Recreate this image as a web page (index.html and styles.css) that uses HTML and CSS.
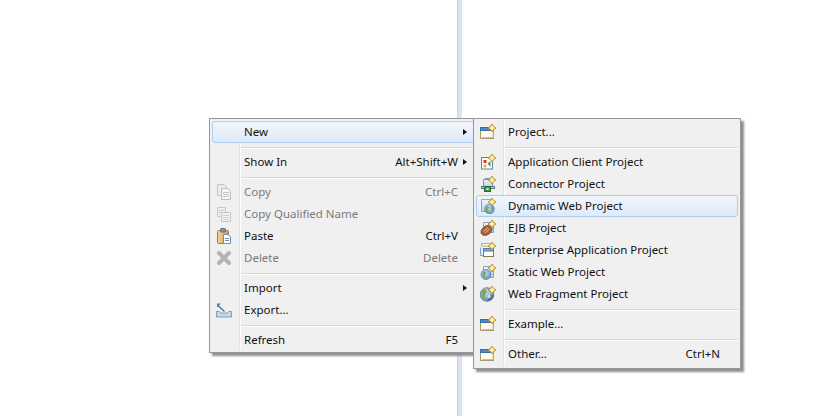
FILE: index.html
```html
<!DOCTYPE html>
<html lang="en">
<head>
<meta charset="utf-8">
<title>Context menu</title>
<link rel="stylesheet" href="styles.css">
</head>
<body>
<svg class="defs" width="0" height="0" aria-hidden="true">
  <defs>
    <linearGradient id="blue" x1="0" y1="0" x2="0" y2="1"><stop offset="0" stop-color="#eef5fb"/><stop offset="1" stop-color="#b8d2ea"/></linearGradient>
    <linearGradient id="clip" x1="0" y1="0" x2="1" y2="0"><stop offset="0" stop-color="#f6d3a0"/><stop offset="1" stop-color="#d49a58"/></linearGradient>
    <radialGradient id="sea" cx=".4" cy=".35" r=".8"><stop offset="0" stop-color="#c4e2f8"/><stop offset="1" stop-color="#4a8cc4"/></radialGradient>
    <symbol id="spark" viewBox="0 0 16 16">
      <path d="M12 0 13.600 2.400 16 4 13.600 5.600 12 8 10.400 5.600 8 4 10.400 2.400Z" fill="#ffdf70" stroke="#a88428" stroke-width=".8"/>
      <path d="M12 2.300 13.200 4 12 5.700 10.800 4Z" fill="#fff9d8"/>
    </symbol>
    <symbol id="i-project" viewBox="0 0 16 16">
      <rect x="0.500" y="3.500" width="13" height="11" fill="#fffdf2" stroke="#a89a70"/>
      <rect x="0.500" y="3.500" width="11" height="3" fill="#4d87c7" stroke="#3a6ea8"/>
      <path d="M2 13.500H13V7.500" fill="none" stroke="#e8bf60"/>
      <use href="#spark" width="16" height="16"/>
    </symbol>
    <symbol id="i-app" viewBox="0 0 16 16">
      <rect x="1.500" y="3.500" width="11" height="11.500" fill="#fff" stroke="#5f82a6"/>
      <rect x="3.500" y="6" width="3" height="3" fill="#d83a30"/>
      <rect x="3.500" y="10.500" width="3" height="3" fill="#e3b836"/>
      <path d="M7.500 9.500 10.500 7V13Z" fill="#3aa040"/>
      <use href="#spark" width="16" height="16"/>
    </symbol>
    <symbol id="i-conn" viewBox="0 0 16 16">
      <path d="M3.500 3.500H12.500V11H3.500Z" fill="url(#blue)" stroke="#7f93a8"/>
      <path d="M5 2.500H10" stroke="#8a97a5" fill="none"/>
      <rect x="1.500" y="10.500" width="13" height="2" fill="#c2ccd4" stroke="#66747f"/>
      <rect x="4.500" y="10.500" width="6" height="5" fill="#3e9a4c" stroke="#1e6a30"/>
      <rect x="6.500" y="12" width="2" height="2" fill="#d8f0d8"/>
      <use href="#spark" width="16" height="16"/>
    </symbol>
    <symbol id="i-dyn" viewBox="0 0 16 16">
      <path d="M1.500 1.500H11V13.500H1.500Z" fill="url(#blue)" stroke="#8aa4c0"/>
      <path d="M1.500 1.500H10" stroke="#c8a850" fill="none"/>
      <circle cx="9.500" cy="11" r="4.800" fill="url(#sea)" stroke="#4a6c90" stroke-width=".6"/>
      <path d="M6 9C8 7.500 9 8.500 9 9.500S7.500 11.500 8 12.500 10 14.500 9 15.500C7 15 5 12.500 6 9ZM11 8C13 8.500 14 10.500 14 11.500L12 12.500 11 10.500Z" fill="#7fa850"/>
      <use href="#spark" width="16" height="16"/>
    </symbol>
    <symbol id="i-ejb" viewBox="0 0 16 16">
      <path d="M3.500 2.500H13.500V12.500H3.500Z" fill="url(#blue)" stroke="#8aa4c0"/>
      <ellipse cx="6.500" cy="10.500" rx="6" ry="4.300" fill="#a8623a" stroke="#6c3a20" stroke-width=".7" transform="rotate(-35 6.500 10.500)"/>
      <path d="M3.500 11.500 8 7.500M5 13 9.500 9" stroke="#eccfa8" stroke-width=".9" fill="none"/>
      <use href="#spark" width="16" height="16"/>
    </symbol>
    <symbol id="i-ent" viewBox="0 0 16 16">
      <path d="M0.500 5.500V13.500H3.500" fill="#dcebf8" stroke="#7fa8d0"/>
      <path d="M1.500 1.500H11V4H1.500Z" fill="#fffdf2" stroke="#c8a850"/>
      <rect x="3.500" y="6.500" width="10" height="8" fill="#fffdf2" stroke="#8a7850"/>
      <rect x="3.500" y="6.500" width="10" height="2.500" fill="#7fabd8" stroke="#4f7fb0"/>
      <use href="#spark" width="16" height="16"/>
    </symbol>
    <symbol id="i-static" viewBox="0 0 16 16">
      <path d="M3.500 2.500H13.500V13.500H3.500Z" fill="url(#blue)" stroke="#8aa4c0"/>
      <circle cx="6" cy="10.500" r="5" fill="url(#sea)" stroke="#4a6c90" stroke-width=".6"/>
      <path d="M3 8C5 7 6 8 6 9S4.500 11 5 12 7 14 6 15.300C4 14.500 1.500 11 3 8Z" fill="#7fa850"/>
      <use href="#spark" width="16" height="16"/>
    </symbol>
    <symbol id="i-frag" viewBox="0 0 16 16">
      <circle cx="7" cy="8.500" r="6.800" fill="url(#sea)" stroke="#3f658c" stroke-width=".7"/>
      <path d="M3 4C5 3 7 4 6.500 6.500S4 9 5 11 7 13 6 15C3 14 -.5 9 3 4Z" fill="#7fa850"/>
      <path d="M7.500 9H14C14 12 11 15 7.500 15.300Z" fill="#5a6f90"/>
      <path d="M7.500 9H10.500V12H7.500Z" fill="#ead9a0"/>
      <use href="#spark" width="16" height="16"/>
    </symbol>
    <symbol id="i-copy" viewBox="0 0 16 16">
      <path d="M1.500 0.500H8L10.500 3V11.500H1.500Z" fill="#ececec" stroke="#c4c4c4"/>
      <path d="M5.500 4.500H11.500L14.500 7.500V15.500H5.500Z" fill="#f4f4f4" stroke="#bdbdbd"/>
      <path d="M7 8.500H13M7 10.500H13M7 12.500H13" stroke="#c8c8c8"/>
    </symbol>
    <symbol id="i-copyq" viewBox="0 0 16 16">
      <path d="M1.500 1.500H9.500V10.500H1.500Z" fill="#ececec" stroke="#c8c8c8"/>
      <path d="M3 4.500H8M3 6.500H8" stroke="#d0d0d0"/>
      <path d="M5.500 6.500H14.500V15.500H5.500Z" fill="#f4f4f4" stroke="#c4c4c4"/>
      <path d="M7 9.500H13M7 11.500H13M7 13.500H13" stroke="#cccccc"/>
    </symbol>
    <symbol id="i-paste" viewBox="0 0 16 16">
      <rect x="1.500" y="2.500" width="11" height="13" rx="1" fill="url(#clip)" stroke="#a87a40"/>
      <rect x="4.500" y="0.500" width="5" height="3.500" rx="1" fill="#7d95ad" stroke="#4f6c88"/>
      <path d="M7.500 6.500H12L14.500 9V15.500H7.500Z" fill="#fff" stroke="#6f8fb0"/>
      <path d="M9 10.500H13M9 12.500H13" stroke="#6f8fb0"/>
    </symbol>
    <symbol id="i-del" viewBox="0 0 16 16">
      <path d="M3 3 13 13M13 3 3 13" stroke="#b4b4b4" stroke-width="4" stroke-linecap="round"/>
    </symbol>
    <symbol id="i-export" viewBox="0 0 16 16">
      <path d="M0.500 9.500H3.500L5 11H11L12.500 9.500H15.500V15H0.500Z" fill="#c4d8ec" stroke="#7a9cbe"/>
      <path d="M2 3.500 8.500 9.500" stroke="#4a6a8c" stroke-width="1.200" fill="none"/>
      <path d="M1 1.500H5L1 5.500Z" fill="#4f7fb0"/>
    </symbol>
  </defs>
</svg>

<div class="canvas">
  <div class="stripe"></div>

  <div class="menu menu-main">
    <div class="item active"><span class="ico"></span><span class="label">New</span><span class="arrow"></span></div>
    <div class="sep"></div>
    <div class="item"><span class="ico"></span><span class="label">Show In</span><span class="key">Alt+Shift+W</span><span class="arrow"></span></div>
    <div class="sep"></div>
    <div class="item off"><span class="ico"><svg class="svg"><use href="#i-copy"/></svg></span><span class="label">Copy</span><span class="key">Ctrl+C</span><span class="noarrow"></span></div>
    <div class="item off"><span class="ico"><svg class="svg"><use href="#i-copyq"/></svg></span><span class="label">Copy Qualified Name</span></div>
    <div class="item"><span class="ico"><svg class="svg"><use href="#i-paste"/></svg></span><span class="label">Paste</span><span class="key">Ctrl+V</span><span class="noarrow"></span></div>
    <div class="item off"><span class="ico"><svg class="svg"><use href="#i-del"/></svg></span><span class="label">Delete</span><span class="key">Delete</span><span class="noarrow"></span></div>
    <div class="sep"></div>
    <div class="item"><span class="ico"></span><span class="label">Import</span><span class="arrow"></span></div>
    <div class="item"><span class="ico"><svg class="svg"><use href="#i-export"/></svg></span><span class="label">Export...</span></div>
    <div class="sep"></div>
    <div class="item"><span class="ico"></span><span class="label">Refresh</span><span class="key">F5</span><span class="noarrow"></span></div>
  </div>

  <div class="menu menu-sub">
    <div class="item"><span class="ico"><svg class="svg"><use href="#i-project"/></svg></span><span class="label">Project...</span></div>
    <div class="sep"></div>
    <div class="item"><span class="ico"><svg class="svg"><use href="#i-app"/></svg></span><span class="label">Application Client Project</span></div>
    <div class="item"><span class="ico"><svg class="svg"><use href="#i-conn"/></svg></span><span class="label">Connector Project</span></div>
    <div class="item active"><span class="ico"><svg class="svg"><use href="#i-dyn"/></svg></span><span class="label">Dynamic Web Project</span></div>
    <div class="item"><span class="ico"><svg class="svg"><use href="#i-ejb"/></svg></span><span class="label">EJB Project</span></div>
    <div class="item"><span class="ico"><svg class="svg"><use href="#i-ent"/></svg></span><span class="label">Enterprise Application Project</span></div>
    <div class="item"><span class="ico"><svg class="svg"><use href="#i-static"/></svg></span><span class="label">Static Web Project</span></div>
    <div class="item"><span class="ico"><svg class="svg"><use href="#i-frag"/></svg></span><span class="label">Web Fragment Project</span></div>
    <div class="sep"></div>
    <div class="item"><span class="ico"><svg class="svg"><use href="#i-project"/></svg></span><span class="label">Example...</span></div>
    <div class="sep"></div>
    <div class="item"><span class="ico"><svg class="svg"><use href="#i-project"/></svg></span><span class="label">Other...</span><span class="key">Ctrl+N</span><span class="noarrow"></span></div>
  </div>
</div>
</body>
</html>
```
FILE: styles.css
```css
* { box-sizing: border-box; }
html, body { margin: 0; padding: 0; background: #fff; }
body { width: 832px; height: 416px; overflow: hidden; font-family: "Noto Sans", "Open Sans", sans-serif; font-size: 11.5px; color: #111; }
.defs { position: absolute; }
.canvas { position: relative; width: 832px; height: 416px; }
.stripe { position: absolute; left: 457px; top: 0; width: 5px; height: 416px; background: linear-gradient(90deg, #c4cbe0 0, #dbe2f6 30%, #dbe2f6 100%); }
.menu { position: absolute; top: 118px; background: #f0f0f0; border: 1px solid #979797; padding: 2px; box-shadow: 3px 3px 2px #8f8f8f; }
.menu-main { left: 209px; width: 266px; height: 235px; }
.menu-sub { left: 473px; width: 268px; height: 251px; }
.menu::before { content: ""; position: absolute; top: 2px; bottom: 2px; left: 29px; width: 1px; background: #e2e3e3; box-shadow: 1px 0 0 #fff; }
.item { position: relative; display: flex; align-items: center; height: 22px; border: 1px solid transparent; border-radius: 3px; }
.item.active { background: linear-gradient(#f1f6fc, #dfe9f8); border-color: #aeccf0; }
.menu-main .item.active { margin-right: -4px; padding-right: 4px; }
.item.off { color: #7a7a7a; }
.ico { flex: none; width: 29px; display: flex; padding-left: 3px; }
.svg { display: block; width: 16px; height: 16px; }
.label { flex: 1; padding: 0 0 1px 2px; white-space: nowrap; }
.key { padding-bottom: 1px; white-space: nowrap; }
.arrow, .noarrow { flex: none; width: 13px; height: 7px; }
.arrow { position: relative; }
.arrow::after { content: ""; position: absolute; left: 5px; top: 0; border-left: 4px solid #111; border-top: 3.500px solid transparent; border-bottom: 3.500px solid transparent; }
.menu-sub .noarrow { width: 17px; }
.sep { height: 2px; margin: 4px 0 2px 28px; background: #d8d8d8; border-bottom: 1px solid #fff; }
```
